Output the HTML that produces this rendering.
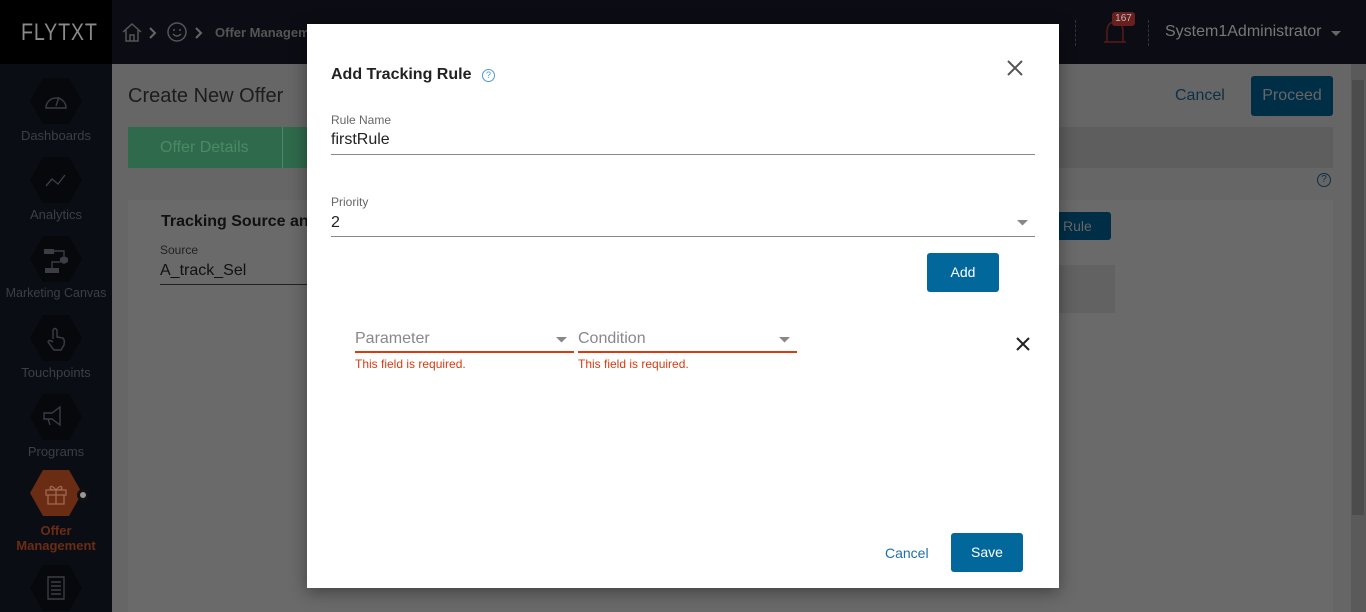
<!DOCTYPE html>
<html><head><meta charset="utf-8"><style>
*{margin:0;padding:0;box-sizing:border-box}
body{width:1366px;height:612px;overflow:hidden;font-family:"Liberation Sans",Arial,sans-serif;background:#666;position:relative}
.a{position:absolute}
.hdr{left:0;top:0;width:1366px;height:64px;background:#0c0d14}
.logo{left:0;top:0;width:112px;height:64px;background:#000}
.side{left:0;top:64px;width:112px;height:548px;background:#0b0d15}
.hex{width:52px;height:46px;background:#07080c;clip-path:polygon(25% 0,75% 0,100% 50%,75% 100%,25% 100%,0 50%)}
.lbl{color:#3b3f47;font-size:13px;text-align:center;width:112px;left:0}
.sep{border-left:1px dashed #333;height:26px;top:20px}
.ic{stroke:#3a3d44;fill:none;stroke-width:1.4}
</style></head><body>
<div class="a hdr"></div>
<div class="a logo"><div style="position:absolute;left:21px;top:19px;color:#8a8a8a;font-size:24px;transform:scaleX(.82);transform-origin:left;letter-spacing:1px">FLYTXT</div></div>
<svg class="a" style="left:120px;top:20px" width="200" height="26"><path d="M3 12 L12 4 L21 12 M6 10 V21 H18 V10 M10 21 V15 H14 V21" stroke="#555" fill="none" stroke-width="1.5"/><path d="M30 8 L35 13 L30 18" stroke="#666" fill="none" stroke-width="2"/><circle cx="57" cy="12" r="9" stroke="#555" fill="none" stroke-width="1.5"/><circle cx="54" cy="10" r="1" fill="#555"/><circle cx="60" cy="10" r="1" fill="#555"/><path d="M53 14 Q57 18 61 14" stroke="#555" fill="none" stroke-width="1.4"/><path d="M76 8 L81 13 L76 18" stroke="#666" fill="none" stroke-width="2"/><text x="95" y="17" fill="#555" font-size="13" font-weight="bold" font-family="Liberation Sans">Offer Managem</text></svg>
<div class="a sep" style="left:1075px"></div><div class="a sep" style="left:1148px"></div>
<svg class="a" style="left:1100px;top:12px" width="30" height="32"><path d="M4 30 H26 M7 30 V20 Q7 10 15 10 Q23 10 23 20 V30" stroke="#5a1a1a" fill="none" stroke-width="1.5"/></svg>
<div class="a" style="left:1112px;top:12px;width:23px;height:14px;background:#6a1f1f;border-radius:3px;color:#bbb;font-size:10px;text-align:center;line-height:14px">167</div>
<div class="a" style="left:1165px;top:23px;color:#777;font-size:16px">System1Administrator</div>
<svg class="a" style="left:1331px;top:30px" width="12" height="8"><path d="M0 1 H10 L5 6Z" fill="#666"/></svg>
<div class="a side"></div>
<div class="a hex" style="left:30px;top:78px"></div><div class="a lbl" style="top:128px">Dashboards</div>
<svg class="a" style="left:44px;top:90px" width="24" height="22"><path class="ic" d="M2 18 A10 10 0 1 1 22 18 Z M12 16 L15 7"/></svg>
<div class="a hex" style="left:30px;top:157px"></div><div class="a lbl" style="top:207px">Analytics</div>
<svg class="a" style="left:44px;top:170px" width="24" height="20"><path class="ic" d="M2 16 L8 9 L14 14 L21 5"/></svg>
<div class="a hex" style="left:30px;top:236px"></div><div class="a lbl" style="top:286px;font-size:12.5px">Marketing Canvas</div>
<svg class="a" style="left:42px;top:244px" width="30" height="30"><path d="M2 5h10v5H2zM3 24h14v5H3zM22 12l4 2v4l-4 2-4-2v-4z" fill="#3a3d44"/><path class="ic" d="M12 7h10v5M10 24v-6h8"/></svg>
<div class="a hex" style="left:30px;top:315px"></div><div class="a lbl" style="top:365px">Touchpoints</div>
<svg class="a" style="left:45px;top:325px" width="22" height="26"><path class="ic" d="M8 14 V5 Q10 2 12 5 V12 L18 13 Q20 15 19 20 L16 25 H9 L3 17 Q4 14 8 17"/></svg>
<div class="a hex" style="left:30px;top:394px"></div><div class="a lbl" style="top:444px">Programs</div>
<svg class="a" style="left:42px;top:405px" width="28" height="24"><path class="ic" d="M2 8 H10 L18 2 V20 L10 14 H2 Z M6 14 L8 20"/></svg>
<div class="a hex" style="left:30px;top:470px;background:#6b2c14"></div>
<svg class="a" style="left:44px;top:483px" width="24" height="22"><path d="M2 7h20v5H2zM4 12v9h16v-9M12 7v14M12 7 Q7 1 6 5 Q6 7 12 7 Q18 7 18 5 Q17 1 12 7" stroke="#a06a50" fill="none" stroke-width="1.3"/></svg>
<div class="a" style="left:77px;top:489px;width:12px;height:12px;border-radius:50%;background:#111;border:3px solid #111"><div style="width:6px;height:6px;background:#999;border-radius:50%"></div></div>
<div class="a lbl" style="top:523px;color:#6b2c14;font-weight:bold;line-height:15px">Offer<br>Management</div>
<div class="a hex" style="left:30px;top:565px"></div>
<svg class="a" style="left:46px;top:576px" width="20" height="24"><path class="ic" d="M2 1h16v22H2zM5 6h10M5 10h10M5 14h10M5 18h10"/></svg>
<div class="a" style="left:128px;top:85px;color:#1c1c1c;font-size:20px">Create New Offer</div>
<div class="a" style="left:1175px;top:87px;color:#0d2f45;font-size:16px">Cancel</div>
<div class="a" style="left:1251px;top:76px;width:82px;height:40px;background:#002e47;border-radius:3px;color:#666;font-size:16px;text-align:center;line-height:40px">Proceed</div>
<div class="a" style="left:128px;top:127px;width:1205px;height:41px;background:#5e5e5e"></div>
<div class="a" style="left:128px;top:127px;width:180px;height:41px;background:#2f6a4c;color:#4a8a66;font-size:16px;padding:12px 32px">Offer Details</div>
<div class="a" style="left:282px;top:127px;width:1px;height:41px;background:#4a8a66"></div>
<div class="a" style="left:128px;top:200px;width:1205px;height:412px;background:#6a6a6a"></div>
<div class="a" style="left:161px;top:213px;color:#111;font-size:16px;font-weight:bold">Tracking Source an</div>
<div class="a" style="left:160px;top:243px;color:#222;font-size:12px">Source</div>
<div class="a" style="left:160px;top:262px;color:#111;font-size:16px">A_track_Sel</div>
<div class="a" style="left:160px;top:284px;width:150px;height:1px;background:#222"></div>
<div class="a" style="left:1050px;top:212px;width:61px;height:28px;background:#002e47;border-radius:3px;color:#666;font-size:14px;line-height:28px;padding-left:13px">Rule</div>
<div class="a" style="left:1050px;top:265px;width:65px;height:48px;background:#626262"></div>
<div class="a" style="left:1317px;top:173px;width:14px;height:14px;border:1px solid #0d2f45;border-radius:50%;color:#0d2f45;font-size:10px;text-align:center;line-height:12px">?</div>
<div class="a" style="left:1351px;top:64px;width:15px;height:548px;background:#5a5a5a"></div>
<div class="a" style="left:1352px;top:80px;width:12px;height:435px;background:#4c4c4c"></div>
<!-- modal -->
<div class="a" style="left:307px;top:24px;width:752px;height:564px;background:#fff;box-shadow:0 4px 16px rgba(0,0,0,.4)"></div>
<div class="a" style="left:331px;top:66px;color:#222;font-size:16px;font-weight:bold">Add Tracking Rule</div>
<div class="a" style="left:482px;top:69px;width:13px;height:13px;border:1px solid #4a9ad0;border-radius:50%;color:#4a9ad0;font-size:9px;text-align:center;line-height:11px">?</div>
<svg class="a" style="left:1007px;top:60px" width="16" height="16"><path d="M1 1L15 15M15 1L1 15" stroke="#555" stroke-width="2"/></svg>
<div class="a" style="left:331px;top:113px;color:#666;font-size:12px">Rule Name</div>
<div class="a" style="left:331px;top:131px;color:#222;font-size:16px">firstRule</div>
<div class="a" style="left:331px;top:154px;width:704px;height:1px;background:#888"></div>
<div class="a" style="left:331px;top:195px;color:#666;font-size:12px">Priority</div>
<div class="a" style="left:331px;top:214px;color:#222;font-size:16px">2</div>
<svg class="a" style="left:1017px;top:220px" width="12" height="6"><path d="M0 0H11L5.5 5.5Z" fill="#888"/></svg>
<div class="a" style="left:331px;top:236px;width:704px;height:1px;background:#888"></div>
<div class="a" style="left:927px;top:253px;width:72px;height:39px;background:#02679a;border-radius:3px;color:#fff;font-size:14px;text-align:center;line-height:39px">Add</div>
<div class="a" style="left:355px;top:330px;color:#888;font-size:16px">Parameter</div>
<svg class="a" style="left:556px;top:337px" width="12" height="6"><path d="M0 0H11L5.5 5.5Z" fill="#888"/></svg>
<div class="a" style="left:355px;top:351px;width:219px;height:2px;background:#d83b10"></div>
<div class="a" style="left:355px;top:357px;color:#d83b10;font-size:12px">This field is required.</div>
<div class="a" style="left:578px;top:330px;color:#888;font-size:16px">Condition</div>
<svg class="a" style="left:779px;top:337px" width="12" height="6"><path d="M0 0H11L5.5 5.5Z" fill="#888"/></svg>
<div class="a" style="left:578px;top:351px;width:219px;height:2px;background:#d83b10"></div>
<div class="a" style="left:578px;top:357px;color:#d83b10;font-size:12px">This field is required.</div>
<svg class="a" style="left:1016px;top:337px" width="14" height="14"><path d="M1 1L13 13M13 1L1 13" stroke="#222" stroke-width="2"/></svg>
<div class="a" style="left:885px;top:545px;color:#1d6fa5;font-size:14px">Cancel</div>
<div class="a" style="left:951px;top:533px;width:72px;height:39px;background:#02679a;border-radius:3px;color:#fff;font-size:14px;text-align:center;line-height:39px">Save</div>
</body></html>
